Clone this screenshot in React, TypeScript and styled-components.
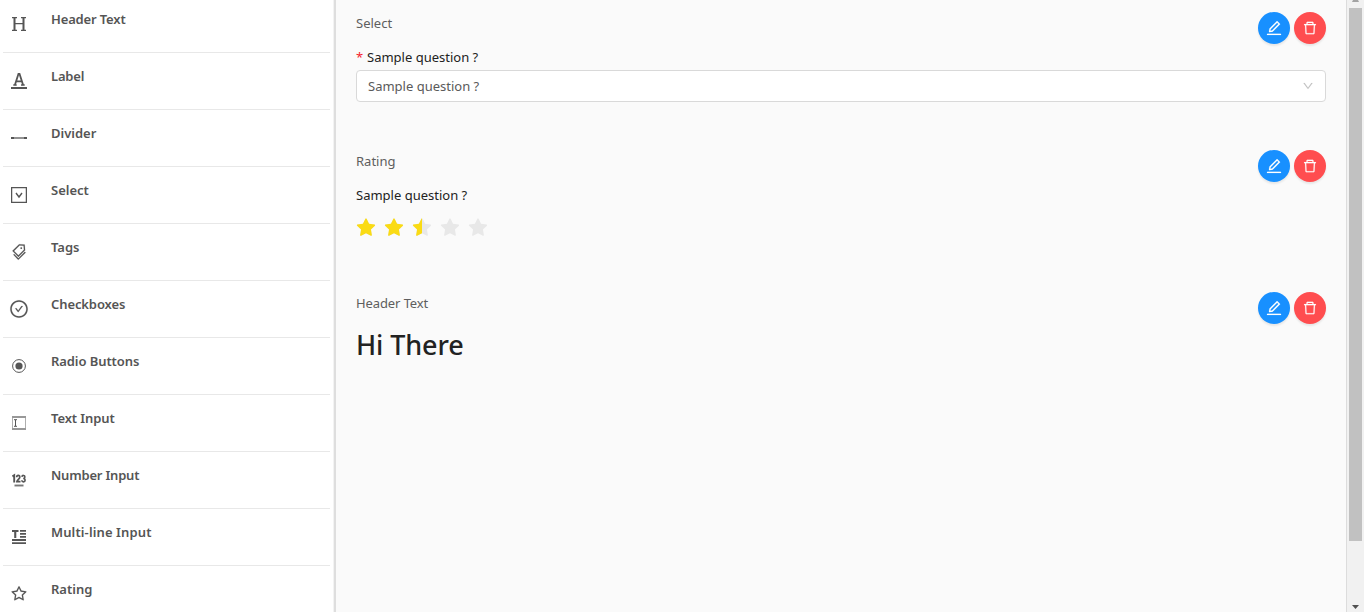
import React from "react";
import styled, { createGlobalStyle } from "styled-components";
import {
  AiFillStar,
  AiOutlineCheckCircle,
  AiOutlineDelete,
  AiOutlineDown,
  AiOutlineEdit,
  AiOutlineStar,
  AiOutlineTags,
} from "react-icons/ai";

const Global = createGlobalStyle`
  * { box-sizing: border-box; }
  html, body { margin: 0; padding: 0; }
  body {
    font-family: "Noto Sans", "Open Sans", sans-serif;
    font-size: 13px;
    color: #222;
    background: #fafafa;
  }
`;

const Page = styled.div`
  display: flex;
  width: 100%;
  height: 612px;
  overflow: hidden;
  background: #fafafa;
`;

const Sidebar = styled.aside`
  flex: none;
  width: 336px;
  height: 612px;
  overflow: hidden;
  padding: 0 4px 0 3px;
  background: #fff;
  border-right: 2px solid #dedede;
  box-shadow: inset -1px 0 0 #f3f3f3;
`;

const ToolList = styled.ul`
  list-style: none;
  width: 327px;
  margin: -4px 0 0;
  padding: 0;
`;

const ToolItem = styled.li`
  display: flex;
  height: 57px;
  border-bottom: 1px solid #e8e8e8;
`;

const ToolIcon = styled.span`
  display: flex;
  align-items: center;
  justify-content: center;
  width: 32px;
  height: 56px;
  color: #555;

  svg { display: block; }
  svg[viewBox="0 0 1024 1024"] { stroke-width: 6px; }
`;

const ToolName = styled.span<{ $spacing: number }>`
  margin-left: 16px;
  padding-top: 12px;
  line-height: 22px;
  font-weight: 600;
  color: #555;
  white-space: nowrap;
  letter-spacing: ${(p) => p.$spacing}px;
`;

const Main = styled.main`
  flex: 1;
  display: flex;
  flex-direction: column;
  padding: 12px 20px 0;
`;

const Block = styled.section<{ $height: number }>`
  height: ${(p) => p.$height}px;
`;

const BlockHead = styled.header`
  display: flex;
  justify-content: space-between;
  height: 34px;
`;

const BlockType = styled.span<{ $spacing: number }>`
  line-height: 22px;
  color: #5e5e5e;
  letter-spacing: ${(p) => p.$spacing}px;
`;

const Actions = styled.div`
  display: flex;
  gap: 4px;
`;

const RoundButton = styled.button<{ $color: string }>`
  display: flex;
  align-items: center;
  justify-content: center;
  width: 32px;
  height: 32px;
  padding: 0;
  border: 0;
  border-radius: 50%;
  color: #fff;
  background: ${(p) => p.$color};
  box-shadow: 0 2px 2px rgba(0, 0, 0, 0.08);

  svg { stroke-width: 8px; }
`;

const Question = styled.div`
  display: flex;
  height: 24px;
  line-height: 22px;
  color: #222;
`;

const Required = styled.span`
  width: 11px;
  color: #f5222d;
`;

const SelectBox = styled.div`
  display: flex;
  align-items: center;
  justify-content: space-between;
  height: 32px;
  padding: 0 11px;
  border: 1px solid #d9d9d9;
  border-radius: 4px;
  color: #5a5a5a;
  background: #fff;

  svg {
    color: #bfbfbf;
    stroke-width: 14px;
  }
`;

const Stars = styled.div`
  display: flex;
  gap: 6px;
  margin-left: -1px;
  padding-top: 9px;
`;

const Star = styled.span`
  position: relative;
  width: 22px;
  height: 22px;
  color: #e8e8e8;

  svg { display: block; }
`;

const StarFill = styled.span<{ $part: number }>`
  position: absolute;
  inset: 0 auto 0 0;
  width: ${(p) => p.$part * 100}%;
  overflow: hidden;
  color: #fadb14;
`;

const Title = styled.h3`
  margin: 0;
  font-size: 27px;
  font-weight: 500;
  line-height: 38px;
  letter-spacing: -0.1px;
  color: #222;
`;

const Scrollbar = styled.div`
  display: flex;
  flex-direction: column;
  align-items: center;
  flex: none;
  width: 18px;
  height: 612px;
  border-left: 1px solid #dcdcdc;
  background: #f1f1f1;

  svg {
    display: block;
    flex: none;
  }
`;

const Thumb = styled.div`
  flex: none;
  width: 13px;
  height: 533px;
  margin: 6px 0 64px;
  background: #c1c1c1;
`;

const HeadingIcon = () => (
  <svg width="16" height="16" viewBox="0 0 16 16" fill="none" stroke="currentColor">
    <path d="M3.500 1.500v13M12.500 1.500v13" strokeWidth="2" />
    <path d="M3.500 7.700h9M1 1.600h5M10 1.600h5M1 14.300h5M10 14.300h5" strokeWidth="1.300" />
  </svg>
);

const LabelIcon = () => (
  <svg width="16" height="16" viewBox="0 0 16 16" fill="none" stroke="currentColor">
    <path d="M3.900 12L7.500 .8h1L12.100 12M5.200 8.400h5.600" strokeWidth="1.800" />
    <path d="M2.300 12h3.400M10 12h3.700" strokeWidth="1.300" />
    <path d="M0 15h16" strokeWidth="2" />
  </svg>
);

const DividerIcon = () => (
  <svg width="16" height="16" viewBox="0 0 16 16">
    <path d="M0 7h16v2H0z" fill="#929292" />
    <path d="M0 7h3v2H0zM13 7h3v2h-3z" fill="#555" />
  </svg>
);

const SelectIcon = () => (
  <svg width="16" height="16" viewBox="0 0 16 16" fill="none" stroke="currentColor">
    <path d="M.6.6h14.8v14.8H.6z" strokeWidth="1.300" />
    <path d="M5 6l3 4 3-4" strokeWidth="1.400" />
  </svg>
);

const RadioIcon = () => (
  <svg width="14" height="14" viewBox="0 0 14 14">
    <circle cx="7" cy="7" r="6.400" fill="none" stroke="currentColor" strokeWidth="1" />
    <circle cx="7" cy="7" r="3.600" fill="currentColor" />
  </svg>
);

const TextInputIcon = () => (
  <svg width="14" height="14" viewBox="0 0 14 14" fill="none" stroke="currentColor">
    <path d="M0 1h14M0 13h14" strokeWidth="1.500" stroke="#777" />
    <path d="M.5 1v12M13.500 1v12" strokeWidth=".8" stroke="#999" />
    <path d="M3.500 4v6M2 3.700h3M2 10.300h3" strokeWidth="1" />
  </svg>
);

const NumberIcon = () => (
  <svg width="14" height="14" viewBox="0 0 14 14" fill="none" stroke="currentColor">
    <path d="M.4 3.400L2.200 2.200V9.400" strokeWidth="1.900" />
    <path d="M4.700 4.200c0-2.400 3.100-2.400 3.100 0 0 1.500-2.800 2.700-2.900 4.400h3.600" strokeWidth="1.700" />
    <path d="M9.900 3.800c.2-1.900 3-1.800 3 .1 0 1.100-.7 1.600-1.700 1.600 1.200 0 1.900.6 1.900 1.700 0 2.200-3.200 2.100-3.300.1" strokeWidth="1.600" />
    <path d="M2.500 12.500h9" strokeWidth="1.900" stroke="#777" />
  </svg>
);

const MultilineIcon = () => (
  <svg width="14" height="14" viewBox="0 0 14 14" fill="currentColor">
    <path d="M0 0h6.500v2H4.300v6H2.200V2H0zM8 0h6v1.700H8zM8 3h6v1.700H8zM8 6h6v1.700H8zM0 9h14v2H0zM0 12.200h14V14H0z" />
  </svg>
);

const tools: { name: string; icon: React.ReactNode; spacing: number }[] = [
  { name: "Header Text", icon: <HeadingIcon />, spacing: -0.15 },
  { name: "Label", icon: <LabelIcon />, spacing: -0.2 },
  { name: "Divider", icon: <DividerIcon />, spacing: 0 },
  { name: "Select", icon: <SelectIcon />, spacing: 0 },
  { name: "Tags", icon: <AiOutlineTags size={18} />, spacing: 0 },
  { name: "Checkboxes", icon: <AiOutlineCheckCircle size={20} />, spacing: -0.1 },
  { name: "Radio Buttons", icon: <RadioIcon />, spacing: -0.08 },
  { name: "Text Input", icon: <TextInputIcon />, spacing: -0.1 },
  { name: "Number Input", icon: <NumberIcon />, spacing: -0.2 },
  { name: "Multi-line Input", icon: <MultilineIcon />, spacing: 0.12 },
  { name: "Rating", icon: <AiOutlineStar size={18} />, spacing: 0 },
];

const FormBlock = (props: {
  type: string;
  height: number;
  spacing?: number;
  children: React.ReactNode;
}) => (
  <Block $height={props.height}>
    <BlockHead>
      <BlockType $spacing={props.spacing ?? 0}>{props.type}</BlockType>
      <Actions>
        <RoundButton $color="#1890ff" aria-label="Edit">
          <AiOutlineEdit size={18} />
        </RoundButton>
        <RoundButton $color="#ff4d4f" aria-label="Delete">
          <AiOutlineDelete size={16} />
        </RoundButton>
      </Actions>
    </BlockHead>
    {props.children}
  </Block>
);

export default function App() {
  return (
    <Page>
      <Global />
      <Sidebar>
        <ToolList>
          {tools.map((t) => (
            <ToolItem key={t.name}>
              <ToolIcon>{t.icon}</ToolIcon>
              <ToolName $spacing={t.spacing}>{t.name}</ToolName>
            </ToolItem>
          ))}
        </ToolList>
      </Sidebar>
      <Main>
        <FormBlock type="Select" height={138}>
          <Question>
            <Required>*</Required>Sample question ?
          </Question>
          <SelectBox>
            Sample question ?
            <AiOutlineDown size={12} />
          </SelectBox>
        </FormBlock>
        <FormBlock type="Rating" height={142}>
          <Question>Sample question ?</Question>
          <Stars>
            {[1, 1, 0.5, 0, 0].map((part, i) => (
              <Star key={i}>
                <AiFillStar size={22} />
                <StarFill $part={part}>
                  <AiFillStar size={22} />
                </StarFill>
              </Star>
            ))}
          </Stars>
        </FormBlock>
        <FormBlock type="Header Text" height={120} spacing={-0.1}>
          <Title>Hi There</Title>
        </FormBlock>
      </Main>
      <Scrollbar>
        <svg width="7" height="2" viewBox="0 0 7 2">
          <path d="M1 0h5l1 2H0z" fill="#a3a3a3" />
        </svg>
        <Thumb />
        <svg width="7" height="4" viewBox="0 0 7 4">
          <path d="M0 0h7L3.500 4z" fill="#505050" />
        </svg>
      </Scrollbar>
    </Page>
  );
}
